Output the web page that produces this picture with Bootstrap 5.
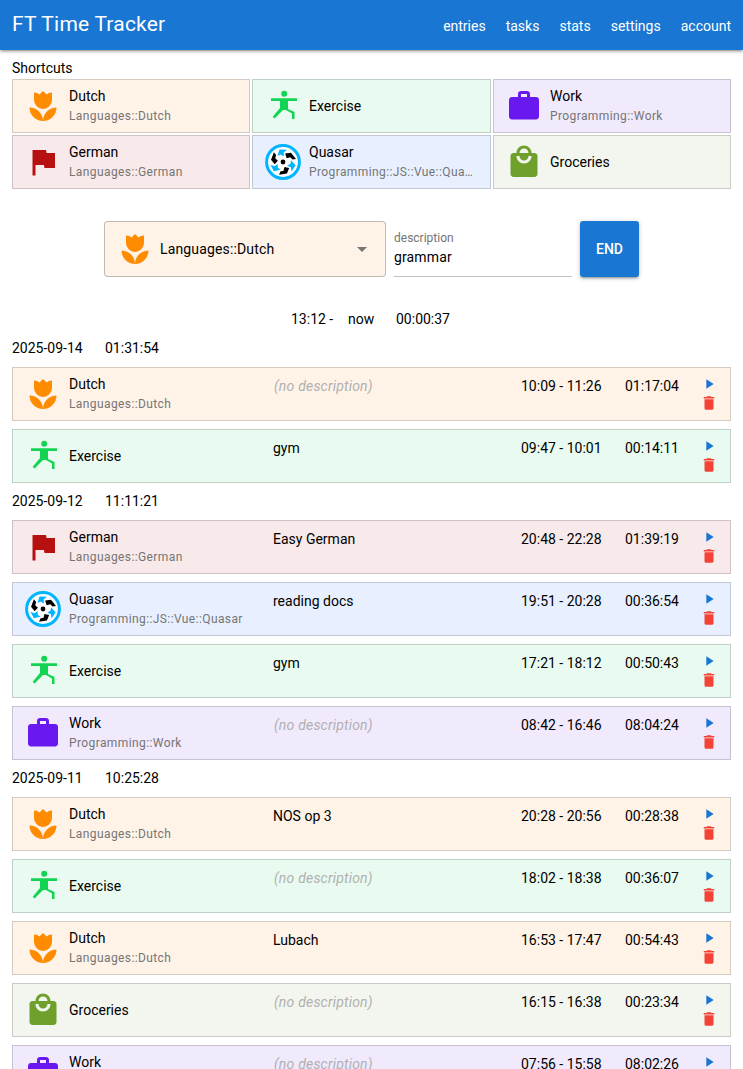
<!DOCTYPE html>
<html lang="en">
<head>
    <meta charset="UTF-8">
    <meta name="viewport" content="width=device-width, initial-scale=1.0">
    <title>FT Time Tracker</title>
    <link href="https://cdn.jsdelivr.net/npm/bootstrap@5.3.0/dist/css/bootstrap.min.css" rel="stylesheet">
    <style>
        html, body { height: 100%; overflow: hidden; }
        body { font-family: Roboto, "Liberation Sans", sans-serif; font-size: 14px; line-height: 20px; color: #000; background: #fff; }
        .tt-header { height: 50px; background: #1976d2; padding: 0 12px; box-shadow: 0 1px 5px rgba(0,0,0,.2), 0 2px 2px rgba(0,0,0,.14), 0 3px 1px -2px rgba(0,0,0,.12); position: relative; }
        .tt-title { font-size: 21px; letter-spacing: .01em; color: #fff; line-height: 48px; }
        .tt-nav { gap: 20px; padding-top: 16px; }
        .tt-nav a { color: #fff; text-decoration: none; font-size: 14px; }
        .tt-main { padding: 8px 12px 0; }
        .tt-shortcut-title { margin-bottom: 1px; }
        .tt-shortcuts { display: grid; grid-template-columns: 238px 239px 238px; gap: 2px; }
        .tt-box { height: 54px; border: 1px solid rgba(0,0,0,.17); border-radius: 0; padding: 0 12px; flex-direction: row; align-items: center; }
        .tt-icon { width: 36px; height: 36px; flex: none; margin-right: 8px; }
        .tt-name { line-height: 20px; white-space: nowrap; overflow: hidden; text-overflow: ellipsis; }
        .tt-sub { font-size: 12px; color: #757575; letter-spacing: .0333em; line-height: 20px; white-space: nowrap; overflow: hidden; text-overflow: ellipsis; }
        .tt-label { min-width: 0; }
        .c-dutch { background: #fff3e8; }
        .c-exercise { background: #e9fbf0; }
        .c-german { background: #f8eaea; }
        .c-quasar { background: #e8f0ff; }
        .c-work { background: #f1e9fc; }
        .c-groceries { background: #f3f6ee; }
        .tt-current { margin-top: 32px; height: 56px; padding-left: 92px; gap: 8px; }
        .tt-select { width: 282px; height: 56px; border: 1px solid rgba(0,0,0,.24); border-radius: 4px; padding: 0 12px; font-size: 14px; letter-spacing: .15px; }
        .tt-select .tt-icon { margin-right: 7px; }
        .tt-caret { width: 0; height: 0; border-left: 5px solid transparent; border-right: 5px solid transparent; border-top: 5px solid #757575; margin-left: auto; margin-right: 6px; }
        .tt-field { width: 178px; height: 56px; border-bottom: 1px solid rgba(0,0,0,.24); padding-top: 8px; }
        .tt-field label { display: block; font-size: 12px; color: #757575; line-height: 18px; }
        .tt-field div { line-height: 20px; font-size: 14px; letter-spacing: .01em; }
        .tt-end { width: 59px; height: 56px; background: #1976d2; border: 0; border-radius: 3px; color: #fff; font-size: 14px; font-weight: 500; padding: 0; box-shadow: 0 1px 5px rgba(0,0,0,.2), 0 2px 2px rgba(0,0,0,.14), 0 3px 1px -2px rgba(0,0,0,.12); }
        .tt-now { margin-top: 32px; margin-bottom: 9px; height: 20px; padding-left: 279px; }
        .tt-now span:nth-child(1) { width: 57px; }
        .tt-now span:nth-child(2) { width: 48px; }
        .tt-day { height: 20px; margin-top: 8px; margin-bottom: 9px; }
        .tt-day span:first-child { width: 93px; }
        .tt-entry { margin-bottom: 8px; position: relative; }
        .tt-task { width: 248px; flex: none; }
        .tt-desc { flex: 1; align-self: flex-start; padding-top: 8px; }
        .tt-desc.empty { color: #b0b0b0; font-style: italic; letter-spacing: .2px; padding-left: 1px; }
        .tt-time { width: 104px; flex: none; align-self: flex-start; padding-top: 8px; }
        .tt-dur { width: 75px; flex: none; align-self: flex-start; padding-top: 8px; }
        .tt-actions { width: 18px; flex: none; align-self: flex-start; padding-top: 8px; }
        .tt-actions svg { display: block; }
        .tt-play { fill: #1976d2; margin: 0 0 2px 1px; }
        .tt-trash { fill: #f44336; }
    </style>
</head>
<body>
    <svg width="0" height="0" class="position-absolute">
        <defs>
            <symbol id="ic-dutch" viewBox="0 0 24 24"><path fill="#ff8c00" d="M3,13A9,9 0 0,0 12,22C12,17 7.97,13 3,13M12,22A9,9 0 0,0 21,13C16.03,13 12,17 12,22M12,14A6,6 0 0,0 18,8V3C17.26,3 16.53,3.12 15.84,3.39C15.29,3.62 14.8,3.96 14.39,4.39L12,2L9.61,4.39C9.2,3.96 8.71,3.62 8.16,3.39C7.47,3.12 6.74,3 6,3V8A6,6 0 0,0 12,14Z"/></symbol>
            <symbol id="ic-exercise" viewBox="0 0 36 36"><circle cx="19.2" cy="5.8" r="3" fill="#13d452"/><path fill="#13d452" d="M6 10.3H32V13H23V21L29.5 24V31H27V25.5L21 22H18L9.5 30.5L7.7 28.7L15 20V13H6Z"/></symbol>
            <symbol id="ic-german" viewBox="0 0 24 24"><path fill="#b71010" d="M14.4 6L14 4H5v17h2v-7h5.6l.4 2h7V6z"/></symbol>
            <symbol id="ic-work" viewBox="0 0 24 24"><path fill="#6a18f0" d="M20 6h-4V4c0-1.11-.89-2-2-2h-4c-1.11 0-2 .89-2 2v2H4c-1.11 0-1.99.89-1.99 2L2 19c0 1.11.89 2 2 2h16c1.11 0 2-.89 2-2V8c0-1.11-.89-2-2-2zm-6 0h-4V4h4v2z"/></symbol>
            <symbol id="ic-groceries" viewBox="0 0 24 24"><path fill="#6fa02c" d="M19 6h-2c0-2.76-2.24-5-5-5S7 3.24 7 6H5c-1.1 0-1.99.9-1.99 2L3 20c0 1.1.9 2 2 2h14c1.1 0 2-.9 2-2V8c0-1.1-.9-2-2-2zm-7-3c1.66 0 3 1.34 3 3H9c0-1.66 1.34-3 3-3zm0 10c-2.76 0-5-2.24-5-5h2c0 1.66 1.34 3 3 3s3-1.34 3-3h2c0 2.76-2.24 5-5 5z"/></symbol>
            <symbol id="ic-quasar" viewBox="0 0 36 36">
                <circle cx="18" cy="18" r="16.4" fill="#fff" stroke="#00b4ff" stroke-width="3"/>
                <circle cx="18" cy="18" r="2.4" fill="#000"/>
                <g id="blade-pair">
                    <path fill="#00b4ff" d="M12.5 12L14.5 5.5L22 5.8L18.6 8.6L19 12.4L15.6 10.6Z"/>
                    <path fill="#000" d="M20.2 9.6L26 8.8L31 15L27.6 15.6L25.2 13.2L21.6 14.2Z"/>
                </g>
                <use href="#blade-pair" transform="rotate(120 18 18)"/>
                <use href="#blade-pair" transform="rotate(240 18 18)"/>
            </symbol>
        </defs>
    </svg>

    <nav class="tt-header d-flex justify-content-between align-items-start">
        <div class="tt-title">FT Time Tracker</div>
        <div class="tt-nav d-flex">
            <a href="#">entries</a>
            <a href="#">tasks</a>
            <a href="#">stats</a>
            <a href="#">settings</a>
            <a href="#">account</a>
        </div>
    </nav>

    <div class="tt-main">
        <div class="tt-shortcut-title">Shortcuts</div>
        <div class="tt-shortcuts" id="shortcuts"></div>

        <div class="tt-current d-flex">
            <div class="tt-select c-dutch d-flex align-items-center">
                <svg class="tt-icon"><use href="#ic-dutch"/></svg>
                <span>Languages::Dutch</span>
                <span class="tt-caret"></span>
            </div>
            <div class="tt-field">
                <label>description</label>
                <div>grammar</div>
            </div>
            <button type="button" class="btn tt-end">END</button>
        </div>

        <div class="tt-now d-flex">
            <span>13:12 -</span>
            <span>now</span>
            <span>00:00:37</span>
        </div>

        <div id="entries"></div>
    </div>

    <script>
        const tasks = {
            dutch: ['Dutch', 'Languages::Dutch'],
            exercise: ['Exercise', ''],
            work: ['Work', 'Programming::Work'],
            german: ['German', 'Languages::German'],
            quasar: ['Quasar', 'Programming::JS::Vue::Quasar'],
            groceries: ['Groceries', '']
        };

        const days = [
            ['2025-09-14', '01:31:54', [
                ['dutch', '', '10:09 - 11:26', '01:17:04'],
                ['exercise', 'gym', '09:47 - 10:01', '00:14:11']
            ]],
            ['2025-09-12', '11:11:21', [
                ['german', 'Easy German', '20:48 - 22:28', '01:39:19'],
                ['quasar', 'reading docs', '19:51 - 20:28', '00:36:54'],
                ['exercise', 'gym', '17:21 - 18:12', '00:50:43'],
                ['work', '', '08:42 - 16:46', '08:04:24']
            ]],
            ['2025-09-11', '10:25:28', [
                ['dutch', 'NOS op 3', '20:28 - 20:56', '00:28:38'],
                ['exercise', '', '18:02 - 18:38', '00:36:07'],
                ['dutch', 'Lubach', '16:53 - 17:47', '00:54:43'],
                ['groceries', '', '16:15 - 16:38', '00:23:34'],
                ['work', '', '07:56 - 15:58', '08:02:26']
            ]]
        ];

        const taskLabel = key => `
            <svg class="tt-icon"><use href="#ic-${key}"/></svg>
            <div class="tt-label">
                <div class="tt-name">${tasks[key][0]}</div>
                ${tasks[key][1] ? `<div class="tt-sub">${tasks[key][1]}</div>` : ''}
            </div>`;

        document.getElementById('shortcuts').innerHTML = Object.keys(tasks).map(key => `
            <div class="card tt-box c-${key}">${taskLabel(key)}</div>
        `).join('');

        document.getElementById('entries').innerHTML = days.map(([date, total, rows]) => `
            <div class="tt-day d-flex"><span>${date}</span><span>${total}</span></div>
            ${rows.map(([key, desc, time, dur]) => `
                <div class="card tt-box tt-entry c-${key}">
                    <div class="tt-task d-flex align-items-center">${taskLabel(key)}</div>
                    <div class="tt-desc ${desc ? '' : 'empty'}">${desc || '(no description)'}</div>
                    <div class="tt-time">${time}</div>
                    <div class="tt-dur">${dur}</div>
                    <div class="tt-actions">
                        <svg class="tt-play" width="16" height="16" viewBox="0 0 24 24"><path d="M8 5v14l11-7z"/></svg>
                        <svg class="tt-trash" width="18" height="18" viewBox="0 0 24 24"><path d="M6 19c0 1.1.9 2 2 2h8c1.1 0 2-.9 2-2V7H6v12zM19 4h-3.5l-1-1h-5l-1 1H5v2h14V4z"/></svg>
                    </div>
                </div>
            `).join('')}
        `).join('');
    </script>
    <script src="https://cdn.jsdelivr.net/npm/bootstrap@5.3.0/dist/js/bootstrap.bundle.min.js"></script>
</body>
</html>
